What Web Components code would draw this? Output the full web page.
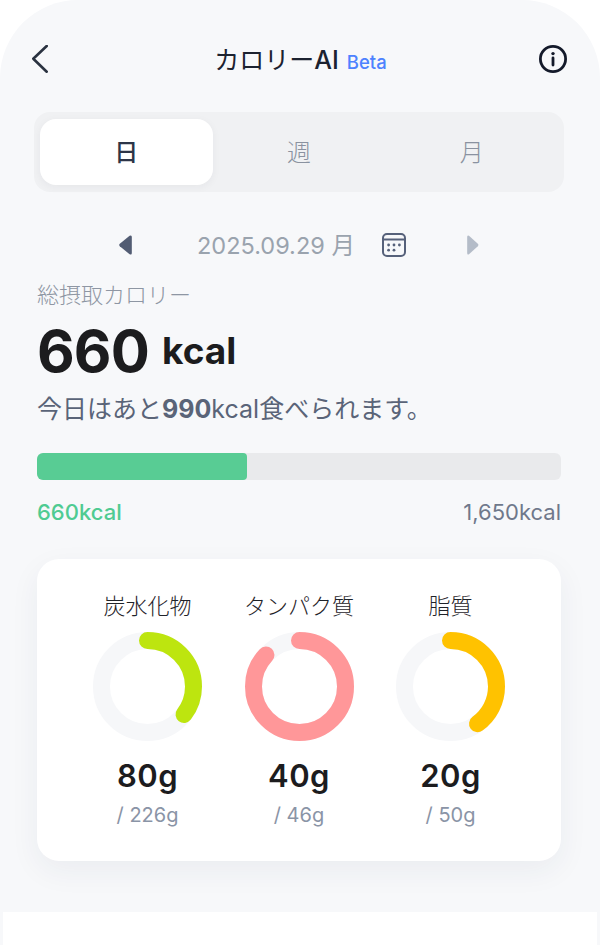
<!DOCTYPE html>
<html lang="ja">
<head>
<meta charset="utf-8">
<title>カロリーAI</title>
<style>
  html, body { margin: 0; background: #fff; }
  body { font-family: Inter, "Noto Sans CJK JP", sans-serif; width: 600px; height: 945px; overflow: hidden; }
</style>
</head>
<body>
<app-screen>
  <top-bar></top-bar>
  <period-tabs></period-tabs>
  <date-nav></date-nav>
  <calorie-summary></calorie-summary>
  <macro-card>
    <macro-ring name="炭水化物" value="80g" goal="/ 226g" pct="35.4" color="#bde50f"></macro-ring>
    <macro-ring name="タンパク質" value="40g" goal="/ 46g" pct="87" color="#ff9799"></macro-ring>
    <macro-ring name="脂質" value="20g" goal="/ 50g" pct="40" color="#ffc200"></macro-ring>
  </macro-card>
</app-screen>

<script>
class AppScreen extends HTMLElement {
  connectedCallback() {
    this.attachShadow({ mode: 'open' });
    this.shadowRoot.innerHTML = `
      <style>
        :host {
          display: flex;
          flex-direction: column;
          height: 945px;
          background: #f7f8fa;
          border-radius: 78px 78px 0 0;
        }
        .content { flex: 1; display: flex; flex-direction: column; }
        .sheet { height: 33px; margin: 0 3px; background: #fff; }
      </style>
      <div class="content"><slot></slot></div>
      <div class="sheet"></div>
    `;
  }
}

class TopBar extends HTMLElement {
  connectedCallback() {
    this.attachShadow({ mode: 'open' });
    this.shadowRoot.innerHTML = `
      <style>
        :host {
          display: grid;
          grid-template-columns: 16px 1fr 30px;
          grid-template-rows: 28px;
          align-items: center;
          height: 28px;
          padding: 45px 32px 0 32px;
        }
        svg { display: block; }
        .title {
          display: flex;
          align-items: baseline;
          justify-content: center;
          gap: 8px;
          margin-left: 15px;
          padding-bottom: 2px;
          font-size: 25px;
          font-weight: 400;
          color: #1c2230;
          white-space: nowrap;
        }
        .ai { font-weight: 500; }
        .beta { font-size: 18.5px; font-weight: 500; color: #4d82ff; }
      </style>
      <svg width="16" height="28" viewBox="0 0 16 28" fill="none" stroke="#2a3240" stroke-width="2.6" stroke-linecap="round" stroke-linejoin="round">
        <path d="M14.7 1 L1.3 13.7 L14.7 26.7"/>
      </svg>
      <div class="title"><span>カロリー<span class="ai">AI</span></span><span class="beta">Beta</span></div>
      <svg width="30" height="30" viewBox="0 0 30 30" fill="none" stroke="#141a2a" stroke-width="2.8" stroke-linecap="round">
        <circle cx="15" cy="15" r="12.6"/>
        <path d="M15 14 V21"/>
        <circle cx="15" cy="9.6" r="1.7" fill="#141a2a" stroke="none"/>
      </svg>
    `;
  }
}

class PeriodTabs extends HTMLElement {
  connectedCallback() {
    this.attachShadow({ mode: 'open' });
    this.shadowRoot.innerHTML = `
      <style>
        :host {
          display: grid;
          grid-template-columns: repeat(3, 1fr);
          height: 66px;
          margin: 39px 36px 0 34px;
          padding: 7px 6px;
          background: #f0f1f3;
          border-radius: 16px;
        }
        .tab {
          display: flex;
          align-items: center;
          justify-content: center;
          padding-bottom: 4px;
          font-size: 24px;
          font-weight: 300;
          color: #8a92a0;
          border-radius: 16px;
        }
        .active {
          background: #fff;
          color: #2d3548;
          font-weight: 500;
          box-shadow: 0 2px 8px rgba(30, 40, 60, 0.05);
        }
      </style>
      <div class="tab active">日</div>
      <div class="tab">週</div>
      <div class="tab">月</div>
    `;
  }
}

class DateNav extends HTMLElement {
  connectedCallback() {
    this.attachShadow({ mode: 'open' });
    this.shadowRoot.innerHTML = `
      <style>
        :host {
          display: flex;
          align-items: center;
          height: 26px;
          margin-top: 40px;
          padding-left: 119px;
        }
        svg { display: block; flex: none; }
        .date {
          margin: 0 27px 0 65px;
          padding-bottom: 2px;
          font-size: 23.5px;
          color: #9aa3ae;
          white-space: nowrap;
        }
        .next { margin-left: 61px; }
      </style>
      <svg width="13" height="20" viewBox="0 0 13 20"><path d="M10.6 0.8 L0.8 8.8 Q-0.4 10 0.8 11.2 L10.6 19.2 Q12.8 20.4 12.8 18 V2 Q12.8 -0.4 10.6 0.8Z" fill="#525c73"/></svg>
      <span class="date">2025.09.29 月</span>
      <svg width="24" height="24" viewBox="0 0 24 24" fill="none" stroke="#56617a" stroke-width="2">
        <rect x="1" y="1" width="22" height="22" rx="4"/>
        <path d="M1 6.5 H23"/>
        <g fill="#56617a" stroke="none">
          <circle cx="6.6" cy="12" r="1.4"/><circle cx="12" cy="12" r="1.4"/><circle cx="17.4" cy="12" r="1.4"/>
          <circle cx="6.6" cy="17.2" r="1.4"/><circle cx="12" cy="17.2" r="1.4"/>
        </g>
      </svg>
      <svg class="next" width="13" height="20" viewBox="0 0 13 20"><path d="M2 0.8 L10.8 8.8 Q12 10 10.8 11.2 L2 19.2 Q0.2 20.4 0.2 18 V2 Q0.2 -0.4 2 0.8Z" fill="#b4bcc8"/></svg>
    `;
  }
}

class CalorieSummary extends HTMLElement {
  connectedCallback() {
    this.attachShadow({ mode: 'open' });
    this.shadowRoot.innerHTML = `
      <style>
        :host { display: block; padding: 0 39px 0 37px; margin-top: 21px; }
        .label { font-size: 22px; line-height: 32px; height: 32px; font-weight: 300; color: #8e96a3; white-space: nowrap; }
        .total { display: flex; align-items: center; gap: 13px; height: 72px; line-height: 72px; margin-top: 4px; color: #1c1c1e; font-weight: 700; }
        .total b { font-size: 58px; font-weight: 650; letter-spacing: -0.8px; }
        .total span { font-size: 37px; }
        .remain { font-size: 25px; line-height: 36px; margin-top: 4px; font-weight: 400; color: #5a6478; white-space: nowrap; }
        .remain b { font-weight: 700; }
        .track { height: 27px; margin-top: 26px; background: #e9eaec; border-radius: 6px; overflow: hidden; }
        .fill { width: 40%; height: 100%; background: #58cc94; border-radius: 4px; }
        .ends { display: flex; justify-content: space-between; margin-top: 16px; font-size: 22px; line-height: 32px; color: #6f788b; }
        .ends .now { color: #4fcb92; font-weight: 500; }
      </style>
      <div class="label">総摂取カロリー</div>
      <div class="total"><b>660</b><span>kcal</span></div>
      <div class="remain">今日はあと<b>990</b>kcal食べられます。</div>
      <div class="track"><div class="fill"></div></div>
      <div class="ends"><span class="now">660kcal</span><span>1,650kcal</span></div>
    `;
  }
}

class MacroCard extends HTMLElement {
  connectedCallback() {
    this.attachShadow({ mode: 'open' });
    this.shadowRoot.innerHTML = `
      <style>
        :host {
          display: flex;
          justify-content: center;
          gap: 42.5px;
          height: 302px;
          box-sizing: border-box;
          margin: 31px 39px 0 37px;
          padding-top: 31px;
          background: #fff;
          border-radius: 22px;
          box-shadow: 0 10px 30px rgba(40, 50, 90, 0.06);
        }
      </style>
      <slot></slot>
    `;
  }
}

class MacroRing extends HTMLElement {
  connectedCallback() {
    const name = this.getAttribute('name');
    const value = this.getAttribute('value');
    const goal = this.getAttribute('goal');
    const pct = this.getAttribute('pct');
    const color = this.getAttribute('color');
    this.attachShadow({ mode: 'open' });
    this.shadowRoot.innerHTML = `
      <style>
        :host {
          display: flex;
          flex-direction: column;
          align-items: center;
          width: 109px;
        }
        .name { font-size: 22px; line-height: 32px; font-weight: 300; color: #1f2329; white-space: nowrap; }
        svg { display: block; margin-top: 10px; }
        .value { margin-top: 15px; font-size: 31px; line-height: 40px; letter-spacing: 0.5px; font-weight: 600; color: #1c1c1e; }
        .goal { margin-top: 5px; font-size: 20px; line-height: 28px; color: #8a94a6; }
      </style>
      <div class="name">${name}</div>
      <svg width="109" height="109" viewBox="0 0 109 109" fill="none" stroke-width="17">
        <circle cx="54.5" cy="54.5" r="46" stroke="#f6f7f9"/>
        <circle cx="54.5" cy="54.5" r="46" stroke="${color}" stroke-linecap="round" pathLength="100"
          stroke-dasharray="${pct} 100" transform="rotate(-90 54.5 54.5)"/>
      </svg>
      <div class="value">${value}</div>
      <div class="goal">${goal}</div>
    `;
  }
}

customElements.define('app-screen', AppScreen);
customElements.define('top-bar', TopBar);
customElements.define('period-tabs', PeriodTabs);
customElements.define('date-nav', DateNav);
customElements.define('calorie-summary', CalorieSummary);
customElements.define('macro-card', MacroCard);
customElements.define('macro-ring', MacroRing);
</script>
</body>
</html>
